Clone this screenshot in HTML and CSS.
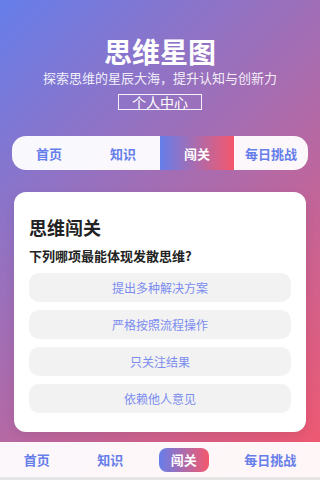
FILE: index.html
```html
<!DOCTYPE html>
<html lang="zh">
<head>
<meta charset="utf-8">
<title>思维星图</title>
<link rel="stylesheet" href="styles.css">
</head>
<body>
<div class="app">
  <main class="page">
    <header class="hero">
      <h1 class="hero-title">思维星图</h1>
      <p class="hero-sub">探索思维的星辰大海，提升认知与创新力</p>
      <button class="hero-btn">个人中心</button>
    </header>
    <nav class="tabs">
      <a class="tab">首页</a>
      <a class="tab">知识</a>
      <a class="tab active">闯关</a>
      <a class="tab">每日挑战</a>
    </nav>
    <section class="card">
      <h2 class="card-title">思维闯关</h2>
      <p class="question">下列哪项最能体现发散思维?</p>
      <div class="options">
        <div class="option">提出多种解决方案</div>
        <div class="option">严格按照流程操作</div>
        <div class="option">只关注结果</div>
        <div class="option">依赖他人意见</div>
      </div>
    </section>
  </main>
  <nav class="bottom-nav">
    <a class="bn-item">首页</a>
    <a class="bn-item">知识</a>
    <a class="bn-item active">闯关</a>
    <a class="bn-item">每日挑战</a>
  </nav>
  <div class="strip"></div>
</div>
</body>
</html>
```
FILE: styles.css
```css
* { box-sizing: border-box; }
html, body { margin: 0; padding: 0; }
body {
  font-family: "Noto Sans CJK SC", "Noto Sans", sans-serif;
  width: 320px;
  height: 480px;
  overflow: hidden;
}
.app {
  height: 480px;
  display: flex;
  flex-direction: column;
  background: linear-gradient(135deg, #667eea 0%, #f5576c 100%);
}
.page {
  flex: 1;
  display: flex;
  flex-direction: column;
  padding: 0 12px;
}
.hero {
  display: flex;
  flex-direction: column;
  align-items: center;
  padding-top: 31px;
  color: #fff;
}
.hero-title {
  margin: 0;
  font-size: 28px;
  line-height: 40px;
  font-weight: 700;
}
.hero-sub {
  margin: 0;
  font-size: 13px;
  line-height: 14px;
  color: rgba(255,255,255,0.9);
}
.hero-btn {
  margin-top: 9px;
  font-family: inherit;
  font-size: 14px;
  line-height: 14px;
  padding: 0 13px;
  border: 1px solid rgba(255,255,255,0.9);
  background: transparent;
  color: #fff;
  border-radius: 0;
}
.tabs {
  margin-top: 26px;
  display: flex;
  height: 34px;
  background: rgba(255,255,255,0.95);
  border-radius: 14px;
  overflow: hidden;
}
.tab {
  flex: 1;
  display: flex;
  align-items: center;
  justify-content: center;
  font-size: 13px;
  font-weight: 700;
  color: #667eea;
}
.tab.active {
  color: #fff;
  background: linear-gradient(90deg, #667eea, #f5576c);
}
.card {
  margin: 22px 2px 0;
  background: #fff;
  border-radius: 12px;
  padding: 20px 15px 19px;
  box-shadow: 0 4px 12px rgba(0,0,0,0.08);
}
.card-title {
  margin: 0;
  font-size: 18px;
  line-height: 30px;
  font-weight: 700;
  color: #222;
}
.question {
  margin: 5px 0 8px;
  font-size: 13px;
  line-height: 18px;
  font-weight: 700;
  color: #222;
}
.options {
  display: flex;
  flex-direction: column;
  gap: 8px;
}
.option {
  height: 29px;
  display: flex;
  align-items: center;
  justify-content: center;
  background: #f2f2f2;
  border-radius: 10px;
  font-size: 12px;
  color: #7b8cf0;
}
.bottom-nav {
  height: 35px;
  display: flex;
  align-items: center;
  justify-content: space-around;
  background: rgba(255,255,255,0.95);
}
.bn-item {
  padding: 0 12px;
  height: 24px;
  line-height: 24px;
  border-radius: 8px;
  font-size: 13px;
  font-weight: 700;
  color: #667eea;
}
.bn-item.active {
  color: #fff;
  background: linear-gradient(90deg, #667eea, #f5576c);
}
.strip {
  height: 3px;
  background: #e6e6e6;
}
```
